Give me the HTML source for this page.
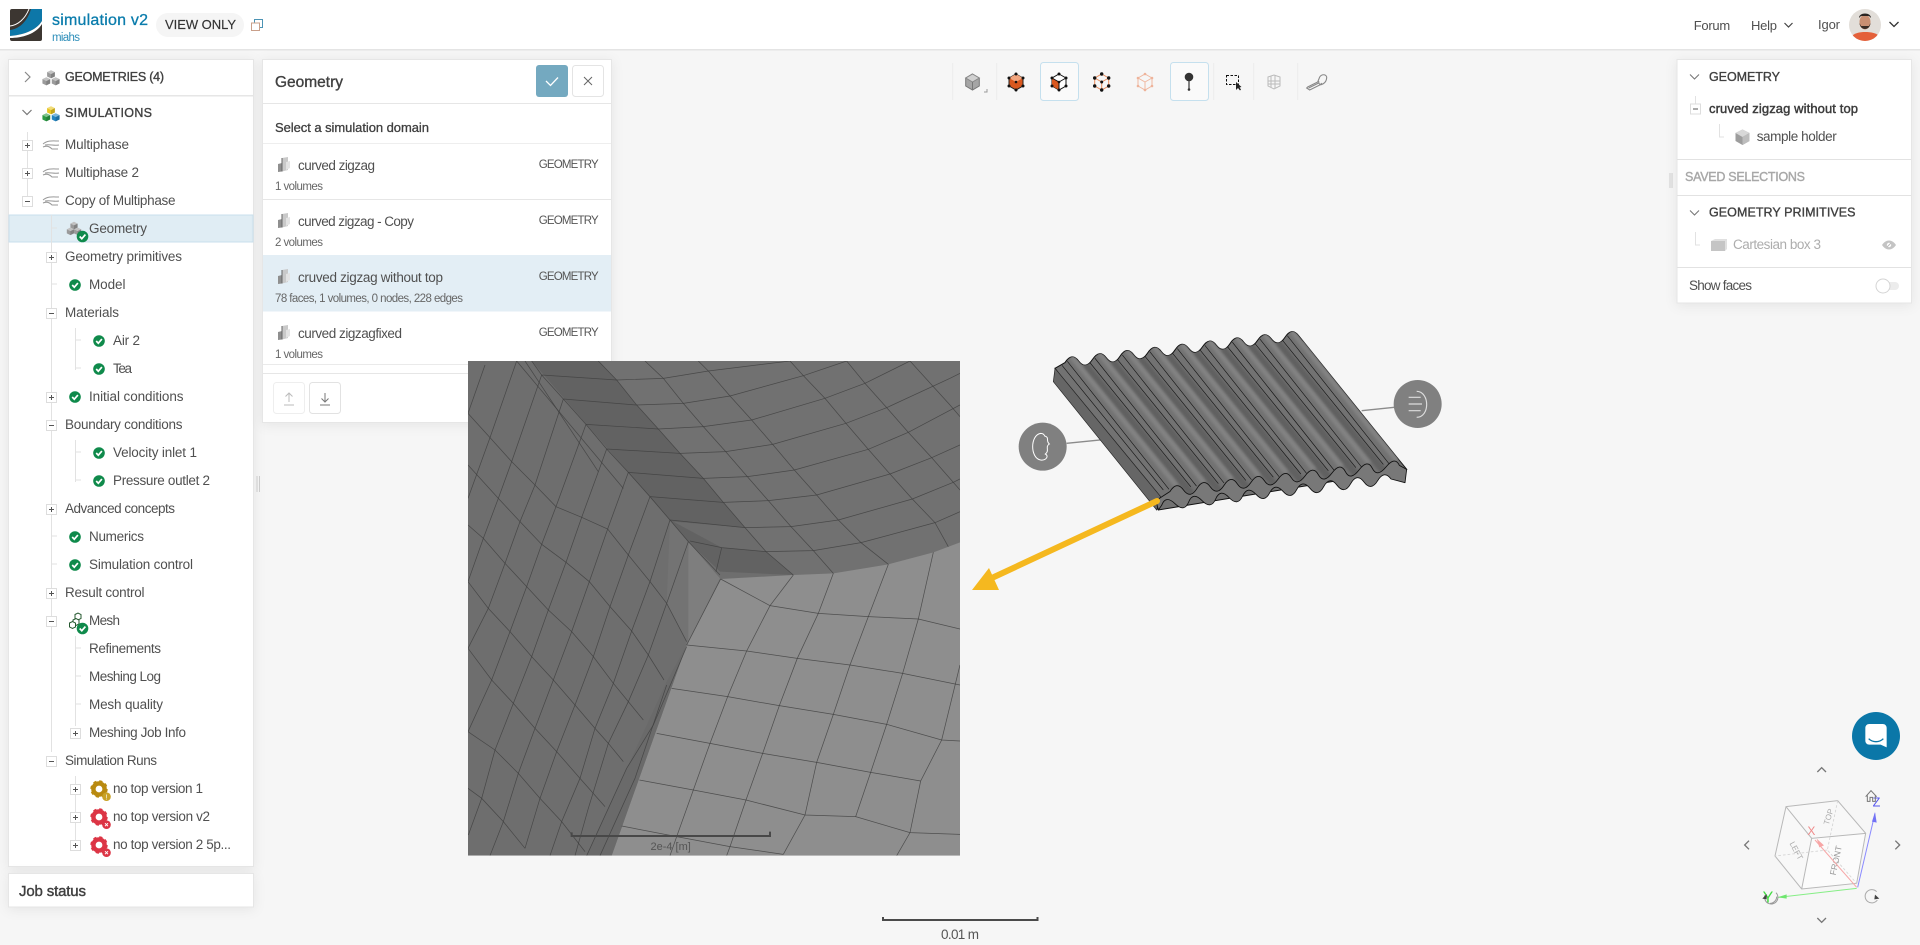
<!DOCTYPE html>
<html lang="en"><head><meta charset="utf-8"><title>simulation v2</title>
<style>
html,body{margin:0;padding:0;width:1920px;height:945px;overflow:hidden;background:#f6f6f6}
svg{position:absolute;left:0;top:0;display:block}
text{font-family:"Liberation Sans",sans-serif;font-size:13.5px;fill:#505050}
.h{font-size:12.5px;fill:#404040;stroke:#404040;stroke-width:.35px}
.s{font-size:11.5px;fill:#666}
.g{font-size:11.5px;fill:#555}
.p{filter:drop-shadow(0 2px 6px rgba(0,0,0,.07))}
.l{stroke:#e2e2e2;stroke-width:1;fill:none}
.mesh polyline{fill:none;stroke:#3e3e3e;stroke-width:2.2;stroke-opacity:.8}
</style></head><body>
<svg width="1920" height="945" viewBox="0 0 1920 945" xmlns="http://www.w3.org/2000/svg">
<defs>
<g id="ck"><circle r="5.8" fill="#0f8a4b"/><path d="M-2.8,0 L-.7,2.2 L2.9,-1.9" fill="none" stroke="#fff" stroke-width="1.7"/></g>
<g id="pl"><rect x="-5" y="-5" width="10" height="10" fill="#fff" stroke="#ddd"/><path d="M-2.5,0H2.5M0,-2.5V2.5" stroke="#555" stroke-width="1"/></g>
<g id="mi"><rect x="-5" y="-5" width="10" height="10" fill="#fff" stroke="#ddd"/><path d="M-2.5,0H2.5" stroke="#555" stroke-width="1"/></g>
<g id="wv" fill="none" stroke="#999" stroke-width="1"><path d="M-8,-1 C-3,-5 2,-4 8,-4"/><path d="M-6,0 C-1,-1 3,1 8,0"/><path d="M-8,2 C-4,0 -1,2 1,4 L7,4"/></g>
<g id="cu"><path d="M0,-5 L5,-2.5 V3 L0,5.5 L-5,3 V-2.5Z"/><path d="M0,-5 L5,-2.5 L0,0 L-5,-2.5Z" fill="#fff" fill-opacity=".4"/><path d="M5,-2.5 V3 L0,5.5 V0Z" fill="#000" fill-opacity=".16"/></g>
<g id="gi"><path d="M-2,-7 L4,-8 V5 L-2,6.5Z" fill="#c9c9c9"/><path d="M-6,-1 L-2,-2 V6.5 L-6,7Z" fill="#8f8f8f"/><path d="M-2,-7 L-2,6.5" stroke="#666"/><path d="M2,-3 L6,-4 V3 L2,5Z" fill="#e3e3e3"/></g>
<g id="gr"><circle r="5.6" fill="none" stroke="currentColor" stroke-width="4.4"/><circle r="7.2" fill="none" stroke="currentColor" stroke-width="3" stroke-dasharray="3 2.65"/></g>
<clipPath id="mc"><rect x="24" y="18" width="1476" height="1484"/></clipPath>
<clipPath id="tc"><path d="M165,115 L195,97.7 Q215.5,66 236,93 T277.5,88.2 T319,83.5 T360,78.7 T401,74 T442.5,69.3 T484,64.5 T525,59.8 T566,55 T607.5,50.3 T649,45.5 T690,40.8 T731,36 T772.5,31.3 T814,26.5 T855,21.8 T896,17 L1220,418 L475,540 Z"/></clipPath>
<clipPath id="av"><circle cx="1865" cy="25" r="16"/></clipPath>
<filter id="bl"><feGaussianBlur stdDeviation="4"/></filter>
<g id="rg"><path d="M255,105 L575,492" stroke="#606060" stroke-width="22" filter="url(#bl)"/><path d="M215,80 L530,468" stroke="#828282" stroke-width="15" filter="url(#bl)"/><path d="M186,106 L490,480 M202,94 L507,478" stroke="#151515" stroke-width="1.9" fill="none"/></g>
</defs>

<!-- header -->
<rect x="0" y="0" width="1920" height="49" fill="#fff"/><rect x="0" y="49" width="1920" height="1.5" fill="#e4e4e4"/>
<rect x="10" y="9" width="32" height="32" rx="2" fill="#3c3631"/>
<path d="M31,9 H42 V21 C36,31 22,35 10,36 V30 C20,29 28,20 31,9Z" fill="#0d77a8"/>
<path d="M10,36 C22,35 36,31 42,21 V24 C36,34 22,38 10,38Z" fill="#fff"/>
<path d="M10,26 C18,25 25,19 29,9" fill="none" stroke="#fff" stroke-width="1"/>
<text x="52" y="25" textLength="96" style="font-size:16px;fill:#0a7cac;stroke:#0a7cac;stroke-width:.3px">simulation v2</text>
<text x="52" y="41" textLength="28" style="font-size:11.5px;fill:#2f8fba">miahs</text>
<rect x="156" y="13" width="88" height="24" rx="12" fill="#f5f5f5"/>
<text x="165" y="29" textLength="71" style="font-size:13px;fill:#333;stroke:#333;stroke-width:.15px">VIEW ONLY</text>
<rect x="254.5" y="19.5" width="8" height="8" fill="#fff" stroke="#4c93b4"/><rect x="251.5" y="23" width="8" height="7.5" fill="#fff" stroke="#c99f8a"/>
<text x="1693.7" y="30" textLength="36.5" style="font-size:13px">Forum</text>
<text x="1751" y="30" textLength="26" style="font-size:13px">Help</text>
<path d="M1784.5,23 L1788.5,27 L1792.5,23" fill="none" stroke="#444" stroke-width="1.2"/>
<text x="1818" y="29" textLength="22" style="font-size:13px">Igor</text>
<g clip-path="url(#av)"><rect x="1849" y="9" width="32" height="32" fill="#e2ded9"/><path d="M1851,41 V37 C1854,33 1860,32 1865,32 C1871,32 1877,33 1880,37 V41Z" fill="#e4603a"/><ellipse cx="1865" cy="22" rx="5.5" ry="7.5" fill="#c98f72"/><path d="M1859,18 C1859,12 1871,12 1871,18 L1869,16 H1861Z" fill="#2a2522"/><path d="M1859.500,23 C1860,31 1870,31 1870.500,23 L1869,26 H1861Z" fill="#3a2c25"/></g>
<path d="M1889.5,22 L1894,26.5 L1898.5,22" fill="none" stroke="#333" stroke-width="1.3"/>

<!-- left panel -->
<g class="p"><rect x="8.5" y="59.5" width="245" height="807" fill="#fff" stroke="#e6e6e6"/></g>
<rect x="9" y="95" width="244" height="1.5" fill="#e6e6e6"/>
<path d="M25,72 L30,77 L25,82" fill="none" stroke="#888" stroke-width="1.2"/>
<g transform="translate(51,78) scale(.78)" fill="#9b9b9b"><use href="#cu" y="-5"/><use href="#cu" x="-6" y="4"/><use href="#cu" x="6" y="4"/></g>
<text x="65" y="81" textLength="99" class="h">GEOMETRIES (4)</text>
<path d="M22.5,110 L27,114.5 L31.5,110" fill="none" stroke="#777" stroke-width="1.2"/>
<g transform="translate(51,114) scale(.78)"><use href="#cu" y="-5" fill="#e8c521"/><use href="#cu" x="-6" y="4" fill="#2c9a44"/><use href="#cu" x="6" y="4" fill="#2384c0"/></g>
<text x="65" y="117" textLength="87" class="h">SIMULATIONS</text>

<path d="M27.5,132V207" class="l"/>
<rect x="9" y="215" width="244" height="27" fill="#e0edf4" stroke="#c9dfec"/>
<path d="M51.5,215V752 M75.5,328V370 M75.5,440V482 M75.5,636V726 M75.5,776V845" class="l"/>
<path d="M52,228h5M52,284h5M52,536h5M52,564h5M76,340h5M76,368h5M76,452h5M76,480h5M76,648h5M76,676h5M76,704h5" class="l"/>
<use href="#pl" x="27.5" y="145.5"/><use href="#wv" x="51" y="145"/><text x="65" y="149" textLength="64">Multiphase</text>
<use href="#pl" x="27.5" y="173.5"/><use href="#wv" x="51" y="173"/><text x="65" y="177" textLength="74">Multiphase 2</text>
<use href="#mi" x="27.5" y="201.5"/><use href="#wv" x="51" y="201"/><text x="65" y="205" textLength="110.5">Copy of Multiphase</text>
<g transform="translate(74,229) scale(.72)" fill="#9a9a9a"><use href="#cu" y="-5"/><use href="#cu" x="-5" y="3"/><use href="#cu" x="5" y="3"/></g><use href="#ck" x="82.5" y="236.5"/><text x="89" y="233" textLength="58">Geometry</text>
<use href="#pl" x="51.5" y="257.5"/><text x="65" y="261" textLength="117">Geometry primitives</text>
<use href="#ck" x="75" y="285"/><text x="89" y="289" textLength="36.5">Model</text>
<use href="#mi" x="51.5" y="313.5"/><text x="65" y="317" textLength="54">Materials</text>
<use href="#ck" x="99" y="341"/><text x="113" y="345" textLength="27">Air 2</text>
<use href="#ck" x="99" y="369"/><text x="113" y="373" textLength="19">Tea</text>
<use href="#pl" x="51.5" y="397.5"/><use href="#ck" x="75" y="397"/><text x="89" y="401" textLength="94.5">Initial conditions</text>
<use href="#mi" x="51.5" y="425.5"/><text x="65" y="429" textLength="117.5">Boundary conditions</text>
<use href="#ck" x="99" y="453"/><text x="113" y="457" textLength="84">Velocity inlet 1</text>
<use href="#ck" x="99" y="481"/><text x="113" y="485" textLength="97">Pressure outlet 2</text>
<use href="#pl" x="51.5" y="509.5"/><text x="65" y="513" textLength="110">Advanced concepts</text>
<use href="#ck" x="75" y="537"/><text x="89" y="541" textLength="55">Numerics</text>
<use href="#ck" x="75" y="565"/><text x="89" y="569" textLength="104">Simulation control</text>
<use href="#pl" x="51.5" y="593.5"/><text x="65" y="597" textLength="79.5">Result control</text>
<use href="#mi" x="51.5" y="621.5"/>
<g fill="#fff" stroke="#25582f" stroke-width="1"><path d="M75,614.500 L78,613 L81,614.500 V618.500 L78,620 L75,618.500Z"/><path d="M73,620 L76,618.500 L79,620 V624 L76,625.500 L73,624Z"/><path d="M69.500,623 L72.500,621.500 L75.500,623 V627 L72.500,628.500 L69.500,627Z"/></g><use href="#ck" x="82.5" y="628.5"/><text x="89" y="625" textLength="31">Mesh</text>
<text x="89" y="653" textLength="72">Refinements</text>
<text x="89" y="681" textLength="72">Meshing Log</text>
<text x="89" y="709" textLength="74">Mesh quality</text>
<use href="#pl" x="75.5" y="733.5"/><text x="89" y="737" textLength="97">Meshing Job Info</text>
<use href="#mi" x="51.5" y="761.5"/><text x="65" y="765" textLength="92">Simulation Runs</text>
<use href="#pl" x="75.5" y="789.5"/><g color="#b98a10" transform="translate(99,789)"><use href="#gr"/></g><circle cx="106.500" cy="796.700" r="4.300" fill="#c9a227"/><text x="105.500" y="799.500" style="font-size:7px;fill:#fff">!</text><text x="113" y="793" textLength="90">no top version 1</text>
<use href="#pl" x="75.5" y="817.5"/><g color="#dc3545" transform="translate(99,817)"><use href="#gr"/></g><circle cx="106.500" cy="824.700" r="4.300" fill="#dc3545"/><path d="M105,823.200l3,3m0-3l-3,3" stroke="#fff"/><text x="113" y="821" textLength="97">no top version v2</text>
<use href="#pl" x="75.5" y="845.5"/><g color="#dc3545" transform="translate(99,845)"><use href="#gr"/></g><circle cx="106.500" cy="852.700" r="4.300" fill="#dc3545"/><path d="M105,851.200l3,3m0-3l-3,3" stroke="#fff"/><text x="113" y="849" textLength="118">no top version 2 5p...</text>

<g class="p"><rect x="8.5" y="873.5" width="245" height="33.500" fill="#fff" stroke="#e6e6e6"/></g>
<text x="19" y="896" textLength="67" style="font-size:15px;fill:#3f3f3f;stroke:#3f3f3f;stroke-width:.4px">Job status</text>
<path d="M257,476V492M259.500,476V492" stroke="#ccc" stroke-width="1"/>

<!-- geometry panel -->
<g class="p"><rect x="262.500" y="59.500" width="349" height="363" fill="#fff" stroke="#e6e6e6"/></g>
<rect x="263" y="103" width="348" height="1" fill="#e6e6e6"/>
<text x="275" y="87" textLength="68" style="font-size:15.500px;fill:#404040;stroke:#404040;stroke-width:.35px">Geometry</text>
<rect x="536" y="65" width="32" height="32" rx="3" fill="#74a9c0"/><path d="M546,81 L550.500,85.500 L558,77.500" fill="none" stroke="#fff" stroke-width="1.300"/>
<rect x="572.500" y="65.500" width="31" height="31" rx="3" fill="#fff" stroke="#e4e4e4"/><path d="M584,77 L592,85 M592,77 L584,85" stroke="#666" stroke-width="1"/>
<text x="275" y="132" textLength="154" style="font-size:13px;fill:#3f3f3f;stroke:#3f3f3f;stroke-width:.3px">Select a simulation domain</text>
<rect x="263" y="143" width="348" height="1" fill="#eee"/>
<rect x="263" y="199" width="348" height="1" fill="#e6e6e6"/>
<rect x="263" y="255" width="348" height="56.500" fill="#e3eef5"/>
<use href="#gi" x="284" y="165"/><text x="298" y="170" textLength="77">curved zigzag</text><text x="275" y="190" textLength="48" class="s">1 volumes</text><text x="538.700" y="168" textLength="60" class="g">GEOMETRY</text>
<use href="#gi" x="284" y="221"/><text x="298" y="226" textLength="116">curved zigzag - Copy</text><text x="275" y="246" textLength="48" class="s">2 volumes</text><text x="538.700" y="224" textLength="60" class="g">GEOMETRY</text>
<use href="#gi" x="284" y="277"/><text x="298" y="282" textLength="145">cruved zigzag without top</text><text x="275" y="302" textLength="188" class="s">78 faces, 1 volumes, 0 nodes, 228 edges</text><text x="538.700" y="280" textLength="60" class="g">GEOMETRY</text>
<use href="#gi" x="284" y="333"/><text x="298" y="338" textLength="104">curved zigzagfixed</text><text x="275" y="358" textLength="48" class="s">1 volumes</text><text x="538.700" y="336" textLength="60" class="g">GEOMETRY</text>
<rect x="263" y="364" width="348" height="1" fill="#eaeaea"/><rect x="263" y="373" width="348" height="1" fill="#e6e6e6"/>
<rect x="273.500" y="382.500" width="31" height="31" rx="3" fill="#fff" stroke="#eee"/><path d="M289,402V393M285.500,396.500L289,393L292.500,396.500M284,405H294" fill="none" stroke="#bbb"/>
<rect x="309.500" y="382.500" width="31" height="31" rx="3" fill="#fff" stroke="#e2e2e2"/><path d="M325,393V402M321.500,398.500L325,402L328.500,398.500M320,405H330" fill="none" stroke="#777"/>

<!-- toolbar -->
<path d="M952.700,63V100M996.700,63V100M1213.700,63V100M1253.700,63V100M1297.700,63V100" stroke="#ececec"/>
<rect x="1040.500" y="62.500" width="38" height="38" rx="3" fill="#fafafa" stroke="#c5e0ee"/>
<rect x="1170.500" y="62.500" width="38" height="38" rx="3" fill="#fafafa" stroke="#c5e0ee"/>
<g transform="translate(972.500,82)"><path d="M0,-8 L6.800,-4 V4 L0,8 L-6.800,4 V-4Z" fill="#a5a5a5" stroke="#777"/><path d="M0,-8 L6.800,-4 L0,0 L-6.800,-4Z" fill="#d0d0d0" stroke="#888"/><path d="M0,0V8" stroke="#777"/></g>
<path d="M984,92h3v-3" fill="none" stroke="#999"/>
<g transform="translate(1016,82)"><path d="M0,-8 L7,-4 V4 L0,8 L-7,4 V-4Z" fill="#d9581f" stroke="#222"/><path d="M0,-8 L7,-4 L0,0 L-7,-4Z" fill="#f3a67f"/><g fill="#111"><circle cy="-8" r="1.500"/><circle cx="7" cy="-4" r="1.500"/><circle cx="7" cy="4" r="1.500"/><circle cy="8" r="1.500"/><circle cx="-7" cy="4" r="1.500"/><circle cx="-7" cy="-4" r="1.500"/><circle r="1.300"/></g></g>
<g transform="translate(1059,82)"><path d="M0,-8 L7,-4 V4 L0,8 L-7,4 V-4Z" fill="#fff" stroke="#111"/><path d="M0,0 L-7,-4 V4 L0,8Z" fill="#d9581f"/><path d="M0,0V8M0,0L7,-4M0,0L-7,-4" stroke="#111"/><g fill="#111"><circle cy="-8" r="1.500"/><circle cx="7" cy="-4" r="1.500"/><circle cx="7" cy="4" r="1.500"/><circle cy="8" r="1.500"/><circle cx="-7" cy="4" r="1.500"/><circle cx="-7" cy="-4" r="1.500"/><circle r="1.300"/></g></g>
<g transform="translate(1101.700,82)"><path d="M0,-8 L7,-4 V4 L0,8 L-7,4 V-4Z M0,0V8M0,0L7,-4M0,0L-7,-4" fill="none" stroke="#e88a5a"/><g fill="#111"><circle cy="-8" r="1.700"/><circle cx="7" cy="-4" r="1.700"/><circle cx="7" cy="4" r="1.700"/><circle cy="8" r="1.700"/><circle cx="-7" cy="4" r="1.700"/><circle cx="-7" cy="-4" r="1.700"/><circle r="1.500"/></g></g>
<g transform="translate(1145,82)"><path d="M0,-8 L7,-4 V4 L0,8 L-7,4 V-4Z M0,0V8M0,0L7,-4M0,0L-7,-4" fill="none" stroke="#f0b8a0"/><g fill="#eeb39a"><circle cy="-8" r="1.300"/><circle cx="7" cy="-4" r="1.300"/><circle cx="7" cy="4" r="1.300"/><circle cy="8" r="1.300"/><circle cx="-7" cy="4" r="1.300"/><circle cx="-7" cy="-4" r="1.300"/></g></g>
<g transform="translate(1189,82)"><circle cy="-5" r="4.300" fill="#333"/><path d="M0,-2V7" stroke="#333" stroke-width="1.200"/><circle cy="7.500" r="1.300" fill="#333"/></g>
<rect x="1226.500" y="75.500" width="12" height="9" fill="none" stroke="#111" stroke-dasharray="2.500 1.500"/><path d="M1236,82 L1236,90 L1238,88 L1240,90.500 L1241,89.500 L1239.500,87.500 L1241.500,87Z" fill="#222"/>
<g transform="translate(1274,82)" fill="none" stroke="#bbb"><path d="M-6,-5 L0,-7 L6,-5 V4 L0,7 L-6,4Z M-3,-6V5.500 M1,-6.500V6.500 M-6,-1 L6,-1 M-6,2 L6,2"/></g>
<g transform="translate(1316.700,82)" fill="none" stroke="#888"><path d="M-10,6 L-7,8 L3,3 C8,2 10,-1 10,-5 C9,-8 5,-8 3,-5 L1,0 L-9,5Z" stroke-width="1.100"/><path d="M2,-1 C2,3 4,3 5,1 M-8,6 L2,1" stroke-width="1"/></g>

<!-- right panel -->
<g class="p"><rect x="1677" y="59.500" width="234.500" height="243.500" fill="#fff" stroke="#e6e6e6"/></g>
<path d="M1690,74.500L1694.500,79L1699,74.500" fill="none" stroke="#777" stroke-width="1.100"/>
<text x="1709" y="81" textLength="71" class="h">GEOMETRY</text>
<path d="M1695.500,96V104" class="l"/><use href="#mi" x="1695.500" y="109"/>
<text x="1709" y="113" textLength="149" style="font-size:13px;fill:#3c3c3c;stroke:#3c3c3c;stroke-width:.45px">cruved zigzag without top</text>
<path d="M1719.500,124V137H1724" class="l"/>
<g transform="translate(1742.500,137)"><path d="M0,-7.500L7,-4V4L0,8L-7,4V-4Z" fill="#9d9d9d"/><path d="M0,-7.500L7,-4L0,0L-7,-4Z" fill="#d8d8d8"/><path d="M0,0L7,-4V4L0,8Z" fill="#bdbdbd"/></g>
<text x="1756.700" y="141" textLength="80">sample holder</text>
<rect x="1677" y="159" width="234" height="1" fill="#e2e2e2"/>
<text x="1685" y="181" textLength="120" style="font-size:12.500px;fill:#a8a8a8;stroke:#a8a8a8;stroke-width:.4px">SAVED SELECTIONS</text>
<rect x="1677" y="195" width="234" height="1" fill="#e2e2e2"/>
<path d="M1690,210.500L1694.500,215L1699,210.500" fill="none" stroke="#777" stroke-width="1.100"/>
<text x="1709" y="216.700" textLength="146.500" class="h">GEOMETRY PRIMITIVES</text>
<path d="M1695.500,232V245H1700" class="l"/>
<path d="M1711,241H1725V251H1711Z" fill="#c5c5c5"/><path d="M1711,241L1715,239H1727L1725,241ZM1725,241L1727,239V249L1725,251Z" fill="#e0e0e0"/>
<text x="1733" y="249" textLength="88" style="fill:#adadad">Cartesian box 3</text>
<g transform="translate(1889,245)"><path d="M-7,0C-3,-6 3,-6 7,0C3,6 -3,6 -7,0Z" fill="#c4c4c4"/><circle r="2.200" fill="#fff"/><path d="M-2,2L2,-2" stroke="#bbb"/></g>
<rect x="1677" y="267" width="234" height="1" fill="#e2e2e2"/>
<text x="1689" y="290" textLength="63">Show faces</text>
<rect x="1880" y="282" width="19" height="8" rx="4" fill="#ececec"/><circle cx="1883" cy="286" r="7" fill="#fff" stroke="#d4d4d4"/>
<path d="M1670,173V188M1672,173V188" stroke="#ccc"/>

<!-- corrugated plate -->
<g transform="translate(1000,330) scale(.33333)">
<path d="M200,340L320,328M1085,242L1183,232" stroke="#8b8b8b" stroke-width="4"/>
<circle cx="128" cy="350" r="72" fill="#808080"/><circle cx="1253" cy="222" r="72" fill="#808080"/>
<path d="M122,310 C90,315 90,385 122,390 C138,392 148,378 136,372 C150,362 134,350 148,342 C136,332 150,322 134,318 C132,312 128,310 122,310Z" fill="none" stroke="#fff" stroke-width="3"/>
<path d="M1226,202H1262M1226,222H1266M1226,242H1262M1250,184 C1290,185 1290,262 1250,262" fill="none" stroke="#ddd" stroke-width="3.500"/>
<path d="M165,115 L195,97.7 Q215.5,66 236,93 T277.5,88.2 T319,83.5 T360,78.7 T401,74 T442.5,69.3 T484,64.5 T525,59.8 T566,55 T607.5,50.3 T649,45.5 T690,40.8 T731,36 T772.5,31.3 T814,26.5 T855,21.8 T896,17 L1220,418 L475,540 Z" fill="#727272" stroke="#111" stroke-width="3"/>
<g clip-path="url(#tc)"><use href="#rg"/><use href="#rg" transform="translate(82.500,-9.600)"/><use href="#rg" transform="translate(165,-19.200)"/><use href="#rg" transform="translate(247.500,-28.800)"/><use href="#rg" transform="translate(330,-38.400)"/><use href="#rg" transform="translate(412.500,-48)"/><use href="#rg" transform="translate(495,-57.600)"/><use href="#rg" transform="translate(577.500,-67.200)"/><use href="#rg" transform="translate(660,-76.800)"/></g>
<path d="M165,115 L160,155 L470,540 L482,500Z" fill="#666" stroke="#222" stroke-width="2"/>
<path d="M478,505 L510,484.6 Q530,452 550.5,480 T591,475.3 T631,470.7 T672,466 T712,461.5 T753,457 T793,452 T834,447.6 T874,443 T915,438 T955,434 T996,429 T1036,424.6 T1077,420 T1117,415 T1158,411 T1198,406 L1220,418 L1215,458 L1173,447 Q1153,419.5 1133,452 T1092,456 T1052,461 T1011,465.6 T971,470 T930,475 T890,479 T849,484 T809,488.6 T768,493 T728,498 T687,502.5 T647,507 T606,511.7 T566,516 T525,521 T485,525.6 L475,540 L470,520Z" fill="#787878" stroke="#111" stroke-width="2.600" stroke-linejoin="round"/>
</g>
<path d="M1157,501 L994,577" stroke="#f5b81f" stroke-width="6" stroke-linecap="round"/>
<path d="M972,590 L989,568 L999,590Z" fill="#f5b81f"/>

<!-- mesh inset -->
<g transform="translate(460,355) scale(.33333)" clip-path="url(#mc)">
<rect x="24" y="18" width="1476" height="1484" fill="#6e6e6e"/>
<path d="M215,18H1500V562 L1420,592 L1285,628 L1120,655 L1000,660 L780,650 L685,560Z" fill="#717171"/>
<path d="M215,18H415L470,75L530,150L595,222L660,295L730,370L790,442L855,518L918,590L1000,660L780,650L685,560Z" fill="#626262"/>
<path d="M640,500 L785,578 L918,590 L855,518Z" fill="#6c6c6c"/>
<path d="M685,560 L780,670 L680,870Z" fill="#7e7e7e"/>
<path d="M630,495L685,560V870L620,745Z" fill="#737373"/>
<path d="M782,672 L1000,660 L1120,655 L1285,628 L1420,592 L1500,562 V1502 H455 L680,870Z" fill="#8e8e8e"/>
<path d="M680,870L455,1502H380L620,980Z" fill="#6a6a6a"/>
<g class="mesh">
<polyline points="245,60 470,75 610,70 745,48 990,18"/>
<polyline points="310,132 530,150 670,145 810,123 1030,62 1160,18"/>
<polyline points="378,208 595,222 730,215 875,195 1095,130 1215,85 1350,18"/>
<polyline points="440,282 660,295 797,290 938,268 1158,205 1280,158 1470,70 1500,55"/>
<polyline points="505,352 730,370 862,365 1003,345 1225,283 1345,232 1500,150"/>
<polyline points="570,425 790,442 925,437 1070,420 1290,357 1415,308 1500,270"/>
<polyline points="630,495 855,518 993,515 1135,495 1357,432 1480,382 1500,372"/>
<polyline points="690,558 785,578 918,590 1060,587 1203,563 1425,503 1500,470"/>
<polyline points="415,18 470,75 530,150 595,222 660,295 730,370 790,442 855,518 918,590 1000,660"/>
<polyline points="555,18 610,70 670,145 730,215 797,290 862,365 925,437 993,515 1060,587 1120,655"/>
<polyline points="715,18 745,48 810,123 875,195 938,268 1003,345 1070,420 1135,495 1203,563 1285,628"/>
<polyline points="990,18 1030,62 1095,130 1158,205 1225,283 1290,357 1357,432 1425,503 1465,575"/>
<polyline points="1160,18 1215,85 1280,158 1345,232 1415,308 1480,382 1500,405"/>
<polyline points="1350,18 1470,150 1500,185"/>
<polyline points="215,18 245,60 310,132 378,208 440,282 505,352 570,425 630,495 685,560 780,660"/>
<polyline points="785,578 768,650"/>
<polyline points="195,18 415,350"/><polyline points="170,18 490,400"/>
<polyline points="24,175 90,248 155,320 225,390 288,455 365,487 443,522 505,600 570,680 620,745 680,860"/>
<polyline points="24,330 115,430 180,500 245,568 318,622 388,680 450,755 515,828 565,900 612,975"/>
<polyline points="24,510 70,550 135,625 200,695 265,765 335,830 400,905 460,985 505,1040 550,1095"/>
<polyline points="24,680 85,760 150,830 215,905 280,975 345,1050 405,1120 445,1165 490,1220"/>
<polyline points="24,880 95,975 160,1045 225,1120 290,1190 360,1270 435,1355"/>
<polyline points="24,1130 105,1185 175,1255 240,1330 305,1400 375,1490"/>
<polyline points="24,1300 65,1330 130,1400 195,1480"/>
<polyline points="75,30 24,175"/>
<polyline points="170,18 90,248 24,430"/>
<polyline points="245,60 155,320 115,430 70,550 24,680"/>
<polyline points="310,132 225,390 180,500 135,625 85,760 24,880"/>
<polyline points="378,208 288,455 245,568 200,695 150,830 95,975 24,1130"/>
<polyline points="440,282 365,487 318,622 265,765 215,905 160,1045 105,1185 65,1330 25,1440"/>
<polyline points="505,352 443,522 388,680 335,830 280,975 225,1120 175,1255 130,1400 90,1502"/>
<polyline points="570,425 505,600 450,755 400,905 345,1050 290,1190 240,1330 195,1480"/>
<polyline points="630,495 570,680 515,828 460,985 405,1120 360,1270 305,1400 270,1502"/>
<polyline points="685,560 620,745 565,900 505,1040 445,1165 385,1360 345,1502"/>
<polyline points="680,875 580,1110 500,1240 380,1502"/><polyline points="620,990 525,1270 420,1502"/>
<polyline points="782,672 930,752 1075,775 1225,785 1375,792 1500,822"/>
<polyline points="680,870 860,888 1012,910 1170,930 1328,955 1500,990"/>
<polyline points="635,1000 803,1025 958,1052 1120,1078 1280,1108 1445,1155 1500,1158"/>
<polyline points="590,1135 750,1165 908,1195 1070,1222 1232,1252 1382,1278"/>
<polyline points="538,1275 700,1305 858,1335 1035,1380 1187,1385 1350,1433 1500,1438"/>
<polyline points="485,1413 650,1445 810,1475 970,1498"/>
<polyline points="1000,660 930,752 860,888 803,1025 750,1165 700,1305 650,1445 630,1502"/>
<polyline points="1120,655 1075,775 1012,910 958,1052 908,1195 858,1335 810,1475 800,1502"/>
<polyline points="1285,628 1225,785 1170,930 1120,1078 1070,1222 1035,1380 970,1498"/>
<polyline points="1420,592 1375,792 1328,955 1280,1108 1232,1252 1187,1385"/>
<polyline points="1500,930 1445,1155 1382,1278 1350,1433 1310,1502"/>
<polyline points="782,672 680,870"/>
</g>
<path d="M335,1432V1443H930V1430" fill="none" stroke="#484848" stroke-width="6"/>
<text x="632" y="1485" text-anchor="middle" style="font-size:33px;fill:#555">2e-4 [m]</text>
</g>

<!-- bottom scale -->
<path d="M883,917V920H1037.500V917" fill="none" stroke="#4a4a4a" stroke-width="2"/>
<text x="960" y="939" text-anchor="middle" textLength="38" style="font-size:13.500px;fill:#555">0.01 m</text>

<!-- chat + gizmo -->
<g transform="translate(1720,700) scale(.33333)">
<circle cx="468" cy="108" r="72" fill="#0b77a8"/>
<path d="M448,72H488C495,72 500,77 500,84V142L482,134H448C441,134 436,129 436,122V84C436,77 441,72 448,72Z" fill="#fff"/>
<path d="M446,116 C458,128 478,128 490,116" fill="none" stroke="#0b77a8" stroke-width="4"/>
<path d="M292,216L305,203L318,216M292,654L305,667L318,654M87,422L74,435L87,448M526,422L539,435L526,448" fill="none" stroke="#777" stroke-width="4"/>
<path d="M275,415L437,400L410,550L245,567Z" fill="#fbfbfb"/>
<path d="M198,320L275,415L245,567L165,468ZM198,320L353,302L437,400L275,415Z" fill="#f8f8f8"/>
<path d="M198,320L353,302L437,400L410,550L245,567L165,468ZM198,320L275,415L437,400M275,415L245,567" fill="none" stroke="#b8b8b8" stroke-width="3"/>
<path d="M353,302L322,450L410,550M322,450L165,468" fill="none" stroke="#d4d4d4" stroke-width="2.500" stroke-dasharray="8 6"/>
<text transform="translate(347,527) rotate(-78)" style="font-size:26px;fill:#9a9a9a">FRONT</text>
<text transform="translate(326,376) rotate(-72)" style="font-size:24px;fill:#aaa">TOP</text>
<text transform="translate(208,430) rotate(62)" style="font-size:24px;fill:#aaa">LEFT</text>
<path d="M410,562L285,420" stroke="#f7a6a6" stroke-width="3"/><path d="M290,416L312,436L298,442Z" fill="#f7a6a6"/>
<path d="M410,565L175,592" stroke="#86ee86" stroke-width="3"/><path d="M172,592L200,583L200,596Z" fill="#6fe66f"/>
<path d="M413,562L465,340" stroke="#8a8aff" stroke-width="3"/><path d="M465,336L470,368L456,365Z" fill="#7272f5"/>
<text x="262" y="405" style="font-size:36px;fill:#ef8a8a">X</text>
<text x="128" y="608" style="font-size:48px;fill:#44dd44">Y</text>
<text x="458" y="320" style="font-size:38px;fill:#5656ee">Z</text>
<path d="M437,290L453,272L470,290M442,286V304H450V292H458V304H466V286" fill="none" stroke="#777" stroke-width="3"/>
<path d="M168,578 A20,20 0 1 1 135,585 M150,610A20,20 0 0 0 170,590" fill="none" stroke="#999" stroke-width="3"/><path d="M127,596L140,582L140,598Z" fill="#444"/>
<path d="M470,575 A20,20 0 1 0 472,600" fill="none" stroke="#aaa" stroke-width="3"/><path d="M478,596L465,584L463,598Z" fill="#444"/>
</g>
</svg>
</body></html>
